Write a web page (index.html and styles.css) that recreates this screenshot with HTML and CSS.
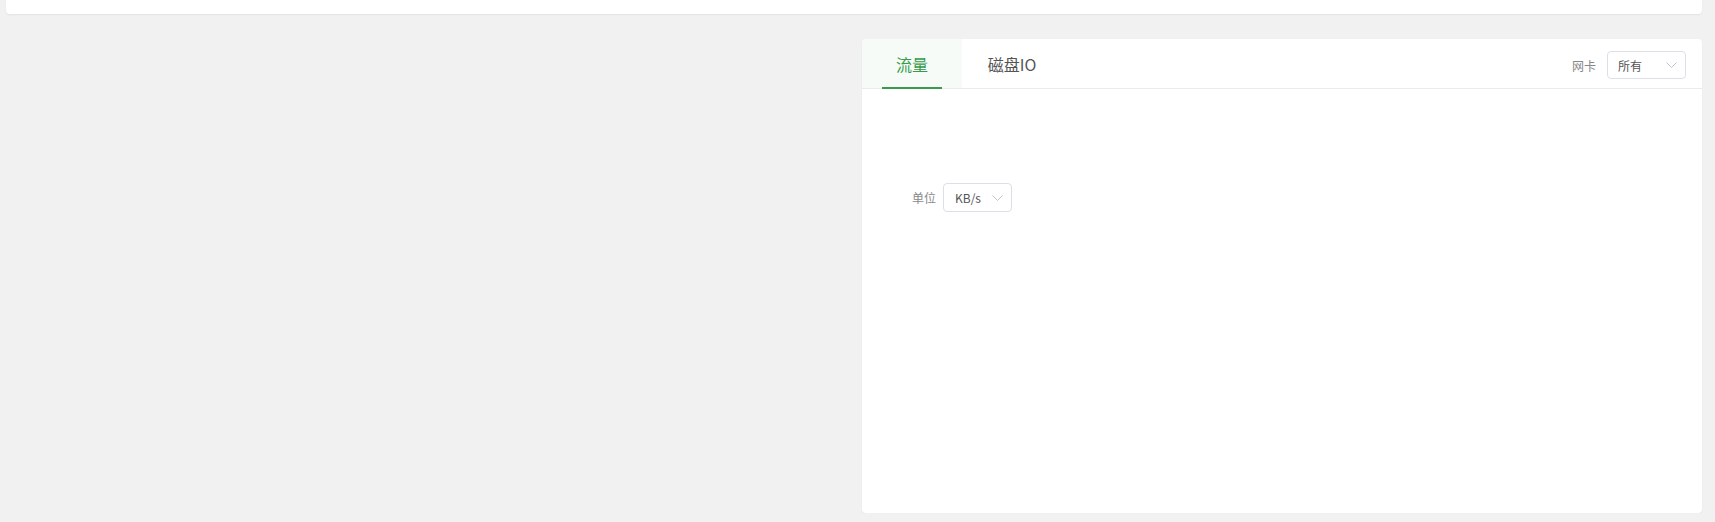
FILE: index.html
```html
<!DOCTYPE html>
<html lang="zh-CN">
<head>
  <meta charset="UTF-8" />
  <title>监控</title>
  <link rel="stylesheet" href="styles.css">
</head>
<body>

<!-- top summary card (scrolled, only bottom visible) -->
<div class="top-card"></div>

<div class="row">
  <div class="col"></div>

  <div class="col">
    <div class="panel">
      <div class="panel-head">
        <div class="tabs">
          <a class="tab active">流量</a>
          <a class="tab">磁盘IO</a>
        </div>
        <div class="head-right">
          <span class="label">网卡</span>
          <div class="select select-nic">
            <span>所有</span>
            <svg class="arrow" width="11" height="6" viewBox="0 0 11 6"><path d="M0.5 0.5 L5.5 5.5 L10.5 0.5" fill="none" stroke="#c0c4cc" stroke-width="1"/></svg>
          </div>
        </div>
      </div>

      <div class="panel-body">
        <div class="unit-row">
          <span class="label">单位</span>
          <div class="select select-unit">
            <span>KB/s</span>
            <svg class="arrow" width="11" height="6" viewBox="0 0 11 6"><path d="M0.5 0.5 L5.5 5.5 L10.5 0.5" fill="none" stroke="#c0c4cc" stroke-width="1"/></svg>
          </div>
        </div>
      </div>
    </div>
  </div>
</div>

</body>
</html>
```

FILE: styles.css
```css
body, html {
  margin: 0;
  background: #f1f1f1;
  font-family: "Microsoft YaHei", "Noto Sans CJK SC", "Liberation Sans", sans-serif;
  color: #555;
}

body {
  padding: 0 13px 0 6px;
}

.top-card {
  height: 14px;
  background: #fff;
  border-radius: 0 0 4px 4px;
  box-shadow: 0 1px 2px rgba(0, 0, 0, 0.06);
}

.row {
  display: grid;
  grid-template-columns: 1fr 1fr;
  gap: 16px;
  margin-top: 25px;
}

.panel {
  height: 474px;
  background: #fff;
  border-radius: 4px;
  box-shadow: 0 1px 2px rgba(0, 0, 0, 0.06);
  overflow: hidden;
}

.panel-head {
  display: flex;
  justify-content: space-between;
  align-items: center;
  height: 49px;
  border-bottom: 1px solid #ebebeb;
  padding-right: 16px;
}

.tabs {
  display: flex;
  height: 100%;
}

.tab {
  position: relative;
  width: 100px;
  display: flex;
  align-items: center;
  justify-content: center;
  font-size: 16px;
  color: #555;
  cursor: pointer;
}

.tab.active {
  background: #f6fbf7;
  color: #369b4c;
}

.tab.active::after {
  content: "";
  position: absolute;
  left: 20px;
  right: 20px;
  bottom: -1px;
  height: 2px;
  background: #3a9a4e;
}

.head-right {
  display: flex;
  align-items: center;
  gap: 11px;
  margin-top: 3px;
}

.label {
  font-size: 12px;
  color: #888;
}

.select {
  display: flex;
  align-items: center;
  justify-content: space-between;
  box-sizing: border-box;
  height: 28px;
  padding: 0 8px 0 10px;
  border: 1px solid #dcdfe6;
  border-radius: 4px;
  font-size: 12px;
  color: #555;
}

.select-nic {
  width: 79px;
}

.select-unit {
  width: 69px;
  height: 29px;
  padding-left: 11px;
}

.arrow {
  display: block;
}

.panel-body {
  padding: 94px 50px;
}

.unit-row {
  display: flex;
  align-items: center;
  gap: 7px;
}
```
